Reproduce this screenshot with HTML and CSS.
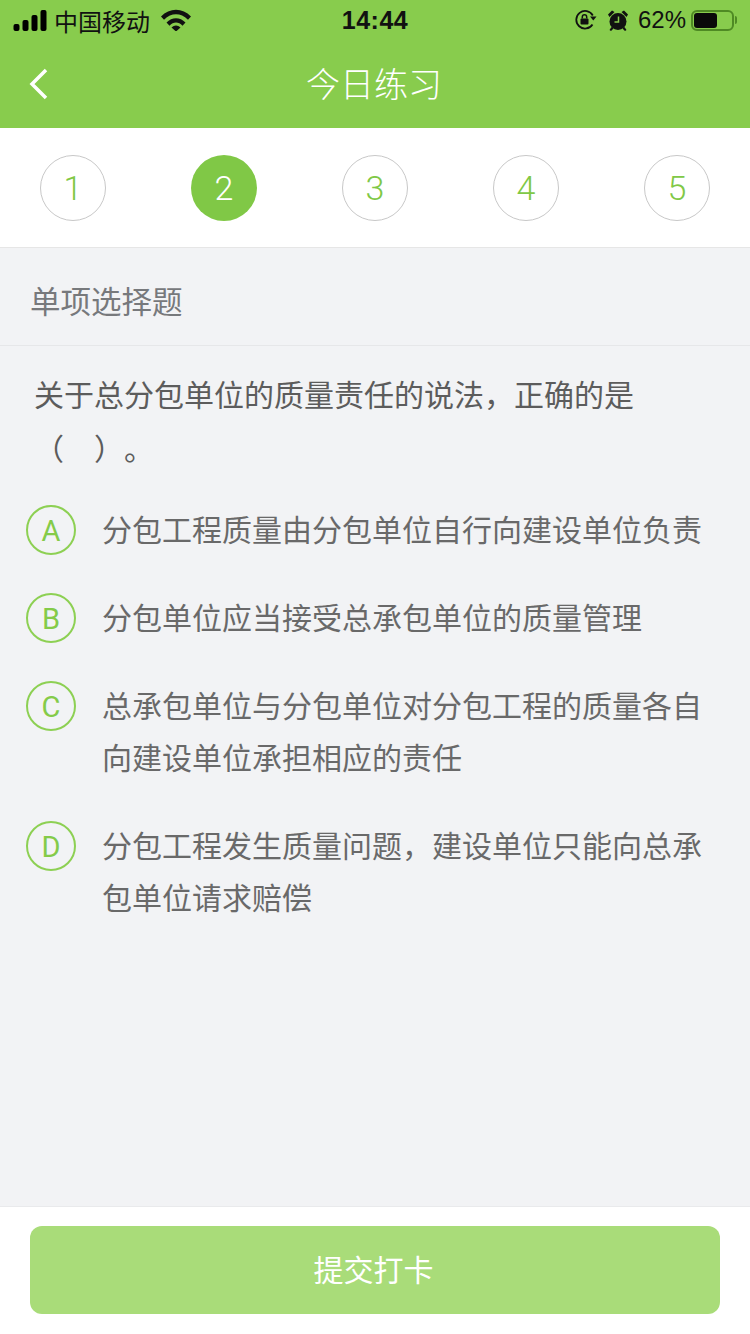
FILE: index.html
```html
<!DOCTYPE html>
<html>
<head>
    <title>今日练习</title>
    <link rel="stylesheet" href="styles.css">
</head>
<body>
    <div class="top">
        <div class="status-bar">
            <div class="status-left">
                <svg class="signal" width="34" height="21" viewBox="0 0 34 21">
                    <rect x="0.500" y="14" width="6" height="7" rx="2"/>
                    <rect x="9.500" y="10" width="6" height="11" rx="2"/>
                    <rect x="18.500" y="5" width="6" height="16" rx="2"/>
                    <rect x="27.500" y="0" width="6" height="21" rx="2"/>
                </svg>
                <span class="carrier">中国移动</span>
                <svg class="wifi" width="30" height="22" viewBox="0 0 30 22">
                    <path d="M0 7.500C8.500-1.500 21.500-1.500 30 7.500l-3 3.200C19.500 3.500 10.500 3.500 3 10.700z"/>
                    <path d="M5.500 13.500C11 7.800 19 7.800 24.500 13.500l-3 3.200C17.500 12.500 12.500 12.500 8.500 16.700z"/>
                    <path d="M10.500 18.500c2.800-2.800 6.200-2.800 9 0L15 22.500z"/>
                </svg>
            </div>
            <div class="status-time">14:44</div>
            <div class="status-right">
                <svg width="22" height="20" viewBox="0 0 22 20" fill="none" stroke="#111" stroke-width="1.800">
                    <path d="M17.500 14.500A8.800 8.800 0 1 1 17.800 5.500"/>
                    <path d="M15 6.500h6.500l-3.200 4z" fill="#111" stroke="none"/>
                    <rect x="5.500" y="8.500" width="8" height="6" rx="1" fill="#111" stroke="none"/>
                    <path d="M7.300 8.500V7a2.200 2.200 0 0 1 4.400 0v1.500" stroke-width="1.500"/>
                </svg>
                <svg class="alarm" width="20" height="21" viewBox="0 0 20 21">
                    <circle cx="10" cy="11.500" r="8.500" fill="#111"/>
                    <path d="M0 4.500L4 .5l2.500 1.500L1.500 7zM20 4.500L16 .5l-2.500 1.500L18.500 7zM3.500 17L1.500 20l1.500 1 2.500-2.500zM16.500 17l2 3-1.500 1-2.500-2.500z" fill="#111"/>
                    <path d="M10.500 6.500v5.500H6.500" fill="none" stroke="#88cc4d" stroke-width="1.500"/>
                </svg>
                <span class="percent">62%</span>
                <div class="battery"><div class="battery-fill"></div></div>
                <div class="battery-tip"></div>
            </div>
        </div>
        <div class="nav-bar">
            <svg class="back" width="20" height="32" viewBox="0 0 20 32" fill="none" stroke="#fff" stroke-width="3.500">
                <path d="M17 2L3 16l14 14"/>
            </svg>
            <div class="nav-title">今日练习</div>
        </div>
    </div>

    <div class="steps">
        <div class="step">1</div>
        <div class="step active">2</div>
        <div class="step">3</div>
        <div class="step">4</div>
        <div class="step">5</div>
    </div>

    <div class="main">
        <div class="type-title">单项选择题</div>
        <div class="question">关于总分包单位的质量责任的说法，正确的是<br>（　）。</div>
        <div class="option">
            <div class="option-mark">A</div>
            <div class="option-text">分包工程质量由分包单位自行向建设单位负责</div>
        </div>
        <div class="option">
            <div class="option-mark">B</div>
            <div class="option-text">分包单位应当接受总承包单位的质量管理</div>
        </div>
        <div class="option">
            <div class="option-mark">C</div>
            <div class="option-text">总承包单位与分包单位对分包工程的质量各自向建设单位承担相应的责任</div>
        </div>
        <div class="option">
            <div class="option-mark">D</div>
            <div class="option-text">分包工程发生质量问题，建设单位只能向总承包单位请求赔偿</div>
        </div>
    </div>

    <div class="footer">
        <button class="submit-button">提交打卡</button>
    </div>
</body>
</html>
```

FILE: styles.css
```css
html, body {
    margin: 0;
    padding: 0;
}
body {
    width: 750px;
    height: 1334px;
    display: flex;
    flex-direction: column;
    overflow: hidden;
    font-family: "Liberation Sans", "Noto Sans CJK SC", sans-serif;
    background-color: #f2f3f5;
}
.top {
    height: 128px;
    flex-shrink: 0;
    background-color: #88cc4d;
}
.status-bar {
    height: 40px;
    display: grid;
    grid-template-columns: 1fr auto 1fr;
    align-items: center;
    color: #111;
}
.status-left {
    display: flex;
    align-items: center;
    padding-left: 13px;
}
.carrier {
    margin-left: 7px;
    font-size: 24px;
}
.wifi {
    margin-left: 11px;
    fill: #111;
}
.status-time {
    font-size: 25px;
    font-weight: bold;
    letter-spacing: 0.5px;
}
.status-right {
    display: flex;
    align-items: center;
    justify-content: flex-end;
    padding-right: 13px;
}
.alarm {
    margin-left: 11px;
}
.percent {
    margin-left: 10px;
    font-size: 24px;
}
.battery {
    margin-left: 5px;
    padding: 1px;
    border: 2px solid #4f8a24;
    border-radius: 6px;
    width: 37px;
    height: 15px;
}
.battery-fill {
    width: 23px;
    height: 15px;
    border-radius: 3px;
    background-color: #0a0a0a;
}
.battery-tip {
    width: 2px;
    height: 8px;
    margin-left: 1px;
    border-radius: 0 2px 2px 0;
    background-color: #4f8a24;
}
.nav-bar {
    position: relative;
    height: 88px;
    display: flex;
    align-items: center;
    justify-content: center;
}
.back {
    position: absolute;
    left: 29px;
    top: 28px;
}
.nav-title {
    padding: 0 2px 4px 0;
    font-size: 34px;
    font-weight: 300;
    color: #fff;
}
.steps {
    height: 119px;
    flex-shrink: 0;
    display: flex;
    justify-content: space-between;
    align-items: center;
    padding: 0 40px;
    background-color: #fff;
    border-bottom: 1px solid #e6e6e6;
}
.step {
    width: 66px;
    height: 66px;
    box-sizing: border-box;
    display: flex;
    align-items: center;
    justify-content: center;
    border: 1px solid #c8c8c8;
    border-radius: 50%;
    font-family: Roboto, sans-serif;
    font-weight: 300;
    font-size: 34px;
    color: #80c846;
}
.step.active {
    border: none;
    background-color: #80c846;
    color: #fff;
}
.main {
    flex: 1;
}
.type-title {
    height: 98px;
    box-sizing: border-box;
    padding-left: 30px;
    line-height: 108px;
    font-size: 30.500px;
    color: #77797c;
    border-bottom: 1px solid #e6e7e9;
}
.question {
    padding: 23px 30px 28px 34px;
    font-size: 30px;
    line-height: 54px;
    color: #5c5c5c;
    text-spacing-trim: space-all;
}
.option {
    display: flex;
    padding-left: 26px;
    margin-bottom: 36px;
}
.option-mark {
    width: 50px;
    height: 50px;
    box-sizing: border-box;
    flex-shrink: 0;
    display: flex;
    align-items: center;
    justify-content: center;
    padding-top: 2px;
    border: 2px solid #8dd053;
    border-radius: 50%;
    font-family: Roboto, sans-serif;
    font-size: 29px;
    color: #84cb49;
}
.option-text {
    width: 610px;
    margin-left: 26px;
    font-size: 30px;
    line-height: 52px;
    color: #696969;
}
.footer {
    height: 128px;
    flex-shrink: 0;
    box-sizing: border-box;
    padding: 19px 30px;
    background-color: #fff;
    border-top: 1px solid #e9eaec;
}
.submit-button {
    width: 690px;
    height: 88px;
    padding: 0 3px 4px 0;
    border: none;
    border-radius: 12px;
    background-color: #a9dc79;
    color: #fff;
    font-family: "Noto Sans CJK SC", sans-serif;
    font-size: 30px;
}
```
